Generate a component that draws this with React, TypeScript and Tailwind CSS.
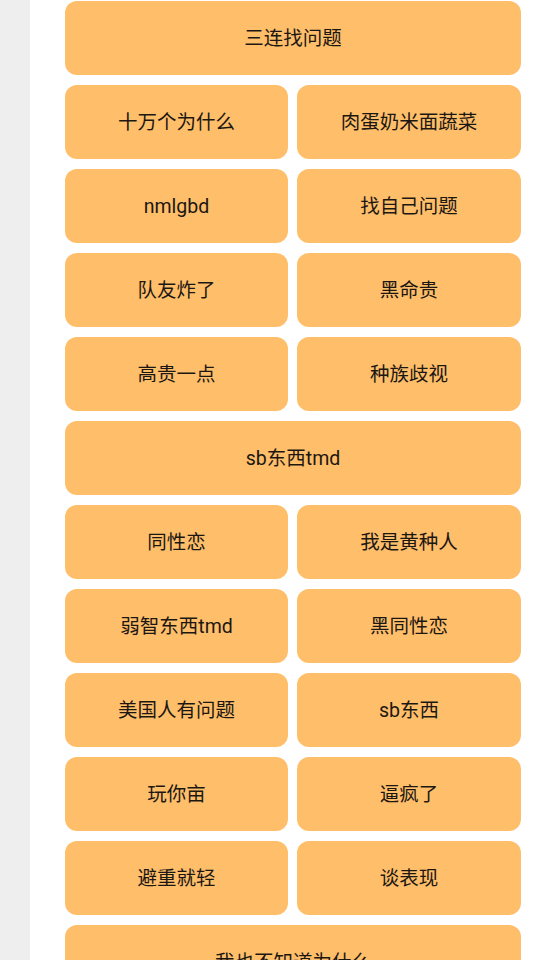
const rows: string[][] = [
  ["三连找问题"],
  ["十万个为什么", "肉蛋奶米面蔬菜"],
  ["nmlgbd", "找自己问题"],
  ["队友炸了", "黑命贵"],
  ["高贵一点", "种族歧视"],
  ["sb东西tmd"],
  ["同性恋", "我是黄种人"],
  ["弱智东西tmd", "黑同性恋"],
  ["美国人有问题", "sb东西"],
  ["玩你亩", "逼疯了"],
  ["避重就轻", "谈表现"],
  ["我也不知道为什么"],
];

export default function App() {
  return (
    <div
      className="flex h-[960px] w-[540px] overflow-hidden bg-white"
      style={{ fontFamily: "Roboto, 'Noto Sans CJK SC', sans-serif" }}
    >
      {/* side strip */}
      <div className="w-[30px] shrink-0 bg-[#eeeeee]" />
      <div className="flex-1 pl-[35px] pt-[1px]">
        <div className="grid w-[456px] grid-cols-[223px_224px] gap-x-[9px] gap-y-[10px]">
          {rows.map((row) =>
            row.length === 1 ? (
              <button
                key={row[0]}
                className="col-span-2 flex h-[74px] items-center justify-center rounded-[12px] bg-[#ffbe6a] pt-[2px] text-[19.5px] text-[#1c1712]"
              >
                {row[0]}
              </button>
            ) : (
              row.map((t) => (
                <button
                  key={t}
                  className="flex h-[74px] items-center justify-center rounded-[12px] bg-[#ffbe6a] pt-[2px] text-[19.5px] text-[#1c1712]"
                >
                  {t}
                </button>
              ))
            )
          )}
        </div>
      </div>
    </div>
  );
}
